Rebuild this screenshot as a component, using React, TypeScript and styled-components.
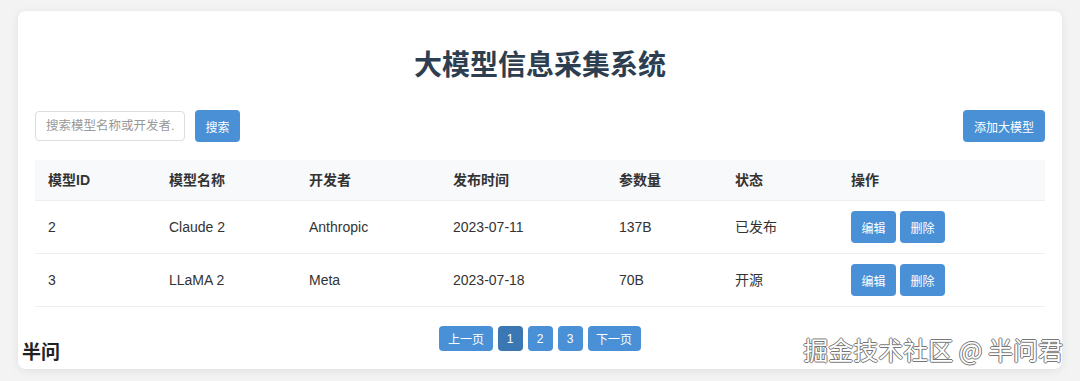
import React from 'react'
import styled, { createGlobalStyle } from 'styled-components'

const GlobalStyle = createGlobalStyle`
  html, body {
    margin: 0;
    padding: 0;
    background: #f3f3f3;
    font-family: "Liberation Sans", "Noto Sans CJK SC", sans-serif;
    color: #333;
  }
`

const Page = styled.div`
  position: relative;
  padding: 11px 18px 12px;
  height: 381px;
  box-sizing: border-box;
  overflow: hidden;
`

const Card = styled.div`
  background: #fff;
  border-radius: 8px;
  box-shadow: 0 2px 10px rgba(0, 0, 0, 0.08);
  padding: 20px 17px 18px;
`

const Title = styled.h1`
  margin: 17px 0 26px;
  font-size: 28px;
  line-height: 36px;
  font-weight: 700;
  text-align: center;
  color: #2c3e50;
`

const Toolbar = styled.div`
  display: flex;
  align-items: center;
  justify-content: space-between;
  margin-bottom: 18px;
`

const SearchGroup = styled.div`
  display: flex;
  align-items: center;
  gap: 10px;
`

const SearchInput = styled.input`
  width: 150px;
  height: 30px;
  box-sizing: border-box;
  padding: 0 10px;
  border: 1px solid #ddd;
  border-radius: 4px;
  font: 12.5px "Liberation Sans", "Noto Sans CJK SC", sans-serif;
  outline: none;
  &::placeholder {
    color: #999;
  }
`

const Button = styled.button<{ $size?: 'sm' | 'md' | 'lg'; $active?: boolean }>`
  display: inline-flex;
  align-items: center;
  justify-content: center;
  border: none;
  border-radius: 4px;
  background: ${(p) => (p.$active ? '#3a77b3' : '#4a90d6')};
  color: #fff;
  cursor: pointer;
  font-family: "Liberation Sans", "Noto Sans CJK SC", sans-serif;
  box-sizing: border-box;
  font-size: 12px;
  height: ${(p) => (p.$size === 'sm' ? '25px' : '32px')};
  min-width: ${(p) => (p.$size === 'sm' ? '25px' : '0')};
  padding: ${(p) => (p.$size === 'sm' ? '0 8.5px' : p.$size === 'lg' ? '0 11px' : '0 10.5px')};
`

const Table = styled.table`
  width: 100%;
  border-collapse: collapse;
  table-layout: fixed;
  font-size: 14px;
`

const Th = styled.th`
  text-align: left;
  font-weight: 700;
  padding: 12px 13px;
  line-height: 16px;
  background: #f8f9fa;
  border-bottom: 1px solid #eee;
  color: #333;
`

const Td = styled.td`
  padding: 10px 13px;
  line-height: 32px;
  border-bottom: 1px solid #eee;
  color: #333;
`

const Actions = styled.div`
  display: flex;
  gap: 4px;
`

const Pagination = styled.div`
  display: flex;
  justify-content: center;
  gap: 5px;
  margin-top: 19px;
`

const Signature = styled.div`
  position: absolute;
  left: 22px;
  bottom: 17px;
  font-size: 19px;
  font-weight: 700;
  color: #222;
  font-family: "Noto Sans CJK SC", sans-serif;
`

const Watermark = styled.div`
  position: absolute;
  right: 17px;
  bottom: 14px;
  font-size: 25px;
  color: #fff;
  font-family: "Noto Sans CJK SC", sans-serif;
  text-shadow: 1px 0 0 #777, -1px 0 0 #777, 0 1px 0 #777, 0 -1px 0 #777;
`

const columns = [
  { label: '模型ID', width: 121 },
  { label: '模型名称', width: 140 },
  { label: '开发者', width: 144 },
  { label: '发布时间', width: 166 },
  { label: '参数量', width: 116 },
  { label: '状态', width: 116 },
  { label: '操作' },
]

const models = [
  { id: 2, name: 'Claude 2', developer: 'Anthropic', date: '2023-07-11', params: '137B', status: '已发布' },
  { id: 3, name: 'LLaMA 2', developer: 'Meta', date: '2023-07-18', params: '70B', status: '开源' },
]

export default function App () {
  return (
    <>
      <GlobalStyle />
      <Page>
        <Card>
          <Title>大模型信息采集系统</Title>
          <Toolbar>
            <SearchGroup>
              <SearchInput placeholder="搜索模型名称或开发者..." />
              <Button>搜索</Button>
            </SearchGroup>
            <Button $size="lg">添加大模型</Button>
          </Toolbar>
          <Table>
            <colgroup>
              {columns.map((c) => (
                <col key={c.label} style={c.width ? { width: c.width } : undefined} />
              ))}
            </colgroup>
            <thead>
              <tr>
                {columns.map((c) => (
                  <Th key={c.label}>{c.label}</Th>
                ))}
              </tr>
            </thead>
            <tbody>
              {models.map((m) => (
                <tr key={m.id}>
                  <Td>{m.id}</Td>
                  <Td>{m.name}</Td>
                  <Td>{m.developer}</Td>
                  <Td>{m.date}</Td>
                  <Td>{m.params}</Td>
                  <Td>{m.status}</Td>
                  <Td>
                    <Actions>
                      <Button>编辑</Button>
                      <Button>删除</Button>
                    </Actions>
                  </Td>
                </tr>
              ))}
            </tbody>
          </Table>
          <Pagination>
            <Button $size="sm">上一页</Button>
            <Button $size="sm" $active>1</Button>
            <Button $size="sm">2</Button>
            <Button $size="sm">3</Button>
            <Button $size="sm">下一页</Button>
          </Pagination>
        </Card>
        <Signature>半问</Signature>
        <Watermark>掘金技术社区 @ 半问君</Watermark>
      </Page>
    </>
  )
}
